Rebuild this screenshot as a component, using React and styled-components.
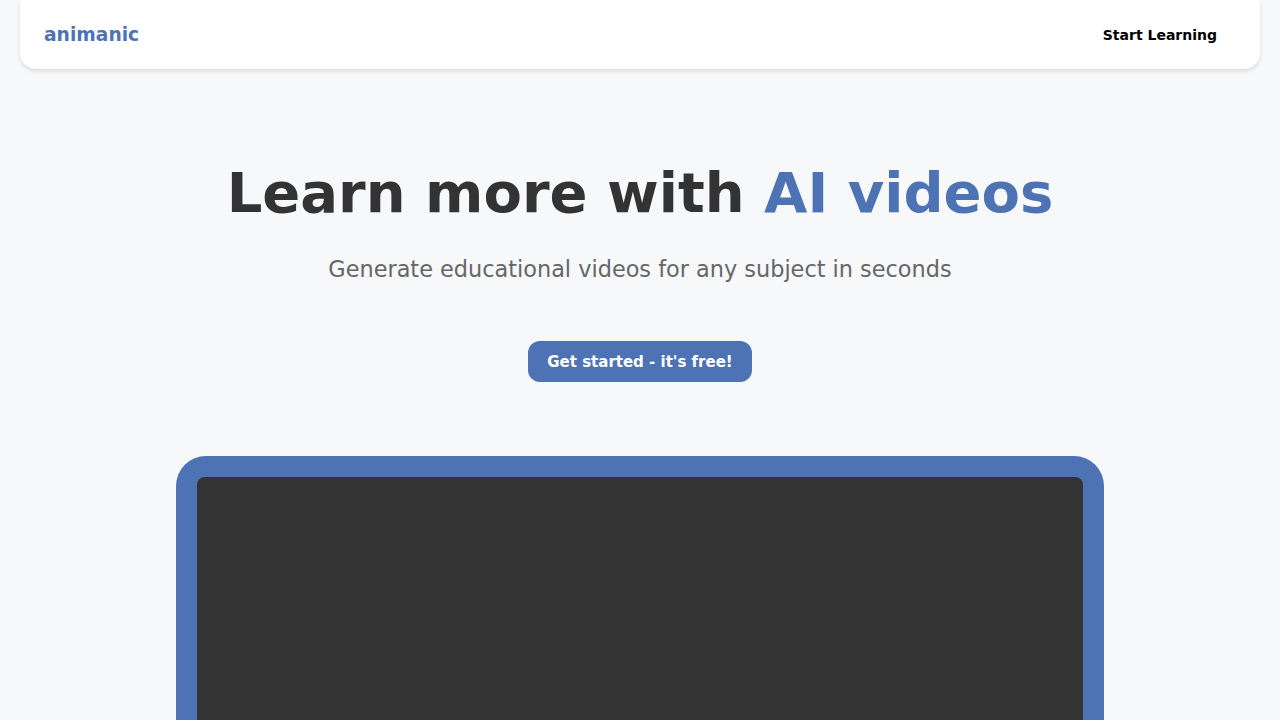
import React from "react";
import styled, { createGlobalStyle } from "styled-components";

const GlobalStyle = createGlobalStyle`
  body {
    margin: 0;
    background: #f7f8fa;
    font-family: "DejaVu Sans", "Liberation Sans", sans-serif;
  }
`;

const Nav = styled.nav`
  margin: 0 20px;
  height: 69px;
  background: #fff;
  border-radius: 0 0 16px 16px;
  box-shadow: 0 2px 4px rgba(0, 0, 0, 0.12);
  display: flex;
  align-items: center;
  justify-content: space-between;
  padding: 0 24px;
`;

const Logo = styled.a`
  font-size: 18.7px;
  font-weight: bold;
  color: #4e73b4;
  text-decoration: none;
`;

const NavButton = styled.a`
  font-size: 14px;
  font-weight: bold;
  color: #000;
  padding: 8px 19px;
  text-decoration: none;
`;

const Hero = styled.section`
  display: flex;
  flex-direction: column;
  align-items: center;
  text-align: center;
  padding-top: 91px;
`;

const Title = styled.h1`
  margin: 0;
  font-size: 56px;
  font-weight: bold;
  color: #333;
  line-height: 66px;

  span {
    color: #4e73b4;
  }
`;

const Subtitle = styled.p`
  margin: 30px 0 0;
  font-size: 22.4px;
  line-height: 26px;
  color: #666;
`;

const CTA = styled.button`
  margin-top: 59px;
  height: 41px;
  width: 224px;
  border: none;
  border-radius: 12px;
  background: #4e73b4;
  color: #fff;
  font-family: inherit;
  font-size: 15px;
  font-weight: bold;
  cursor: pointer;
`;

const Frame = styled.div`
  margin-top: 74px;
  width: 928px;
  height: 500px;
  box-sizing: border-box;
  padding: 21px;
  background: #4e73b4;
  border-radius: 30px;
`;

const Screen = styled.div`
  width: 100%;
  height: 100%;
  background: #333;
  border-radius: 8px;
`;

export default function App() {
  return (
    <>
      <GlobalStyle />
      <Nav>
        <Logo href="#">animanic</Logo>
        <NavButton href="#">Start Learning</NavButton>
      </Nav>
      <Hero>
        <Title>
          Learn more with <span>AI videos</span>
        </Title>
        <Subtitle>Generate educational videos for any subject in seconds</Subtitle>
        <CTA>Get started - it's free!</CTA>
        <Frame>
          <Screen />
        </Frame>
      </Hero>
    </>
  );
}
